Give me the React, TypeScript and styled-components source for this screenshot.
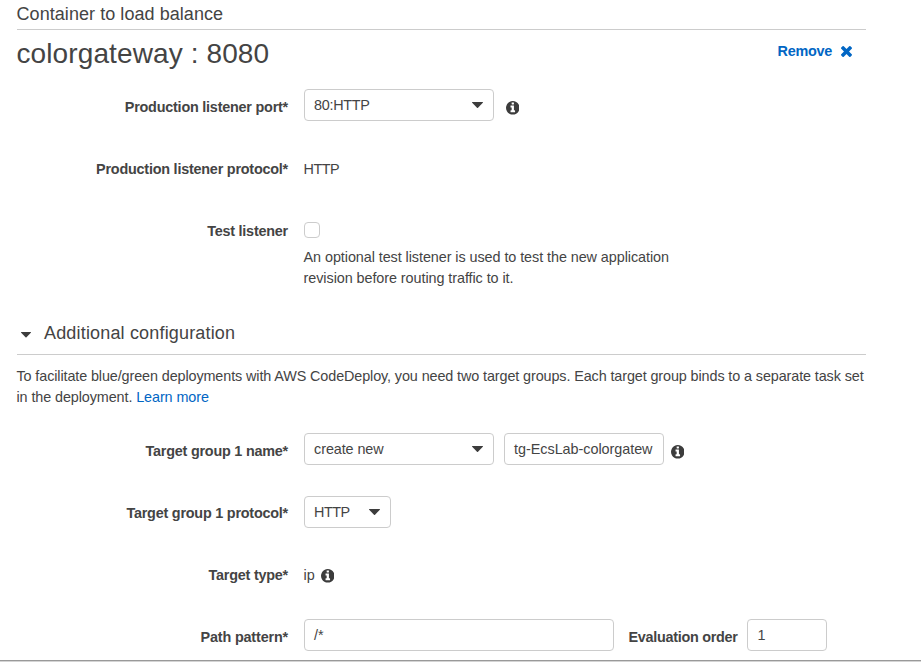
import React from "react";
import styled, { createGlobalStyle } from "styled-components";

const Global = createGlobalStyle`
  * { box-sizing: border-box; }
  body { margin: 0; background: #fff; }
`;

const Page = styled.main`
  height: 662px;
  overflow: hidden;
  display: flex;
  flex-direction: column;
  background: #fff;
  color: #444;
  font-family: "Liberation Sans", Arial, sans-serif;
  font-size: 14.4px;
  line-height: 21px;
`;

const Content = styled.div`
  width: 849.8px;
  height: 660px;
  flex: none;
  margin-left: 16.5px;
`;

const SectionHeading = styled.h3`
  margin: 0;
  height: 30px;
  padding-top: 4px;
  border-bottom: 1px solid #ccc;
  font-size: 18px;
  font-weight: 400;
`;

const TitleBar = styled.div`
  display: flex;
  justify-content: space-between;
  height: 59px;
`;

const Title = styled.h2`
  margin: 0;
  padding-top: 7px;
  font-size: 28px;
  line-height: 34px;
  font-weight: 400;
`;

const RemoveButton = styled.button`
  display: flex;
  align-items: center;
  gap: 9px;
  height: 21px;
  margin: 11px 14.3px 0 0;
  padding: 0;
  border: 0;
  background: none;
  color: #0166c4;
  font: inherit;
  font-weight: 700;
  letter-spacing: -0.25px;
`;

const Row = styled.div`
  display: grid;
  grid-template-columns: 271.5px 1fr;
  column-gap: 15.6px;
  height: 62px;
`;

const Label = styled.label<{ $ls?: number }>`
  padding-top: 8px;
  text-align: right;
  font-weight: 700;
  white-space: nowrap;
  letter-spacing: ${(p) => p.$ls ?? -0.22}px;
`;

const Controls = styled.div<{ $top?: number }>`
  display: flex;
  align-items: flex-start;
  padding-top: ${(p) => p.$top ?? 0}px;
`;

const SelectBox = styled.div<{ $width: number }>`
  display: flex;
  align-items: center;
  justify-content: space-between;
  width: ${(p) => p.$width}px;
  height: 32px;
  padding: 0 9.5px;
  border: 1px solid #ccc;
  border-radius: 4px;
`;

const TextBox = styled.div<{ $width: number; $ml?: number; $ls?: number }>`
  width: ${(p) => p.$width}px;
  height: 32px;
  margin-left: ${(p) => p.$ml ?? 0}px;
  padding: 5px 9.5px 0;
  border: 1px solid #ccc;
  border-radius: 4px;
  white-space: nowrap;
  letter-spacing: ${(p) => p.$ls ?? 0}px;
`;

const StaticText = styled.span<{ $ls?: number }>`
  padding-top: 8px;
  letter-spacing: ${(p) => p.$ls ?? 0}px;
`;

const InlineLabel = styled(Label)`
  margin-left: 14.8px;
`;

const CheckColumn = styled.div`
  padding-top: 9px;
`;

const Checkbox = styled.div`
  width: 16px;
  height: 16px;
  border: 1px solid #ccc;
  border-radius: 4px;
`;

const Help = styled.p`
  margin: 9px 0 0;
  white-space: nowrap;
`;

const Line = styled.span<{ $ls?: number }>`
  display: block;
  white-space: nowrap;
  letter-spacing: ${(p) => p.$ls ?? 0}px;
`;

const Text = styled.span<{ $ls: number }>`
  letter-spacing: ${(p) => p.$ls}px;
`;

const Expander = styled.div`
  display: flex;
  align-items: flex-start;
  height: 42px;
  margin-top: 38px;
  padding: 10px 0 0 4px;
  border-bottom: 1px solid #ccc;
  font-size: 18px;
`;

const ExpanderTitle = styled.span`
  margin-left: 13.5px;
`;

const Paragraph = styled.p`
  margin: 11px 0 25px;
`;

const Link = styled.a`
  color: #0166c4;
`;

const IconSlot = styled.span<{ $ml: number; $mt: number }>`
  display: flex;
  margin: ${(p) => p.$mt}px 0 0 ${(p) => p.$ml}px;
`;

const BottomEdge = styled.div`
  height: 2px;
  flex: none;
  border-top: 1px solid #999;
  background: #d4d4d4;
`;

const InfoIcon = () => (
  <svg width="13.6" height="13.6" viewBox="128 128 1536 1536" fill="#3c3c3c" fillRule="evenodd">
    <path d="M1152 1376v-160q0-14-9-23t-23-9h-96v-512q0-14-9-23t-23-9h-320q-14 0-23 9t-9 23v160q0 14 9 23t23 9h96v320h-96q-14 0-23 9t-9 23v160q0 14 9 23t23 9h448q14 0 23-9t9-23zm-128-896v-160q0-14-9-23t-23-9h-192q-14 0-23 9t-9 23v160q0 14 9 23t23 9h192q14 0 23-9t9-23zm640 416q0 209-103 385.5t-279.5 279.5-385.5 103-385.5-103-279.5-279.5-103-385.5 103-385.5 279.5-279.5 385.5-103 385.5 103 279.5 279.5 103 385.5z" />
  </svg>
);

const CloseIcon = () => (
  <svg width="11" height="11" viewBox="302 366 1188 1188" fill="currentColor">
    <path d="M1490 1322q0 40-28 68l-136 136q-28 28-68 28t-68-28l-294-294-294 294q-28 28-68 28t-68-28l-136-136q-28-28-28-68t28-68l294-294-294-294q-28-28-28-68t28-68l136-136q28-28 68-28t68 28l294 294 294-294q28-28 68-28t68 28l136 136q28 28 28 68t-28 68l-294 294 294 294q28 28 28 68z" />
  </svg>
);

const Caret = ({ width = 11, height = 6 }: { width?: number; height?: number }) => (
  <svg width={width} height={height} viewBox="0 0 11 6" preserveAspectRatio="none">
    <path d="M.3 0h10.4q.5.3.1.8L6 5.7q-.5.4-1 0L.2.8Q-.2.3.3 0z" fill="#3c3c3c" />
  </svg>
);

const Info = ({ ml, mt }: { ml: number; mt: number }) => (
  <IconSlot $ml={ml} $mt={mt}>
    <InfoIcon />
  </IconSlot>
);

export default function App() {
  return (
    <>
      <Global />
      <Page>
        <Content>
          <SectionHeading><Text $ls={0.06}>Container to load balance</Text></SectionHeading>
          <TitleBar>
            <Title><Text $ls={0.11}>colorgateway : 8080</Text></Title>
            <RemoveButton>
              Remove
              <CloseIcon />
            </RemoveButton>
          </TitleBar>
          <Row>
            <Label>Production listener port*</Label>
            <Controls>
              <SelectBox $width={190}>
                <Text $ls={-0.3}>80:HTTP</Text>
                <Caret />
              </SelectBox>
              <Info ml={12} mt={12} />
            </Controls>
          </Row>
          <Row>
            <Label>Production listener protocol*</Label>
            <Controls>
              <StaticText $ls={-0.5}>HTTP</StaticText>
            </Controls>
          </Row>
          <Row>
            <Label>Test listener</Label>
            <CheckColumn>
              <Checkbox />
              <Help>
                <Line $ls={-0.07}>An optional test listener is used to test the new application</Line>
                <Line $ls={-0.07}>revision before routing traffic to it.</Line>
              </Help>
            </CheckColumn>
          </Row>
          <Expander>
            <IconSlot $ml={0} $mt={9}><Caret width={10} height={5.5} /></IconSlot>
            <ExpanderTitle><Text $ls={0.17}>Additional configuration</Text></ExpanderTitle>
          </Expander>
          <Paragraph>
            <Line $ls={-0.11}>
              To facilitate blue/green deployments with AWS CodeDeploy, you need two target groups. Each target group binds to a separate task set
            </Line>
            <Line $ls={-0.1}>
              in the deployment. <Link>Learn more</Link>
            </Line>
          </Paragraph>
          <Row>
            <Label>Target group 1 name*</Label>
            <Controls>
              <SelectBox $width={190}>
                <Text $ls={-0.1}>create new</Text>
                <Caret />
              </SelectBox>
              <TextBox $width={160} $ml={10} $ls={-0.04}>tg-EcsLab-colorgatew</TextBox>
              <Info ml={7} mt={12} />
            </Controls>
          </Row>
          <Row>
            <Label>Target group 1 protocol*</Label>
            <Controls $top={1}>
              <SelectBox $width={87}>
                <Text $ls={-0.5}>HTTP</Text>
                <Caret />
              </SelectBox>
            </Controls>
          </Row>
          <Row>
            <Label>Target type*</Label>
            <Controls>
              <StaticText>ip</StaticText>
              <Info ml={6} mt={12} />
            </Controls>
          </Row>
          <Row>
            <Label $ls={-0.16}>Path pattern*</Label>
            <Controls>
              <TextBox $width={310}>/*</TextBox>
              <InlineLabel $ls={-0.27}>Evaluation order</InlineLabel>
              <TextBox $width={80} $ml={9.3}>1</TextBox>
            </Controls>
          </Row>
        </Content>
        <BottomEdge />
      </Page>
    </>
  );
}
